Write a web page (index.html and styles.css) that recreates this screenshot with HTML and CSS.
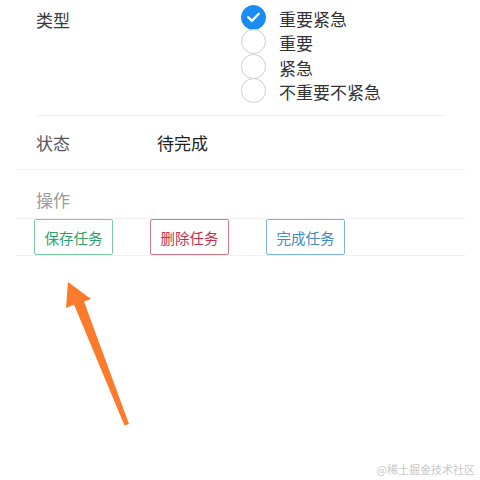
FILE: index.html
```html
<!DOCTYPE html>
<html lang="zh">
<head>
<meta charset="utf-8">
<link rel="stylesheet" href="styles.css">
</head>
<body>
<div class="page">
  <div class="row row-type">
    <div class="label label-dark">类型</div>
    <div class="radios">
      <div class="radio checked">
        <span class="circle">
          <svg viewBox="0 0 24 24" width="24" height="24"><path d="M6.5 12.3 L10.3 16 L17.5 8.6" fill="none" stroke="#fff" stroke-width="2.4" stroke-linecap="round" stroke-linejoin="round"/></svg>
        </span>
        <span class="rtext">重要紧急</span>
      </div>
      <div class="radio"><span class="circle"></span><span class="rtext">重要</span></div>
      <div class="radio"><span class="circle"></span><span class="rtext">紧急</span></div>
      <div class="radio"><span class="circle"></span><span class="rtext">不重要不紧急</span></div>
    </div>
  </div>
  <div class="divider inset"></div>
  <div class="row row-status">
    <div class="label label-mid">状态</div>
    <div class="value">待完成</div>
  </div>
  <div class="divider"></div>
  <div class="row row-op">
    <div class="label label-light">操作</div>
  </div>
  <div class="divider"></div>
  <div class="buttons">
    <button class="btn btn-save">保存任务</button>
    <button class="btn btn-del">删除任务</button>
    <button class="btn btn-done">完成任务</button>
  </div>
  <div class="divider"></div>

  <svg class="arrow" width="480" height="480" viewBox="0 0 480 480">
    <polygon fill="#fb7a2b" points="68,282 66,308 74,304.5 124.5,425.5 129,424 84,301.5 91,299"/>
  </svg>

  <div class="watermark">@稀土掘金技术社区</div>
</div>
</body>
</html>
```

FILE: styles.css
```css
html, body {
  margin: 0;
  padding: 0;
  background: #fff;
}
body {
  font-family: "Noto Sans CJK SC", "Noto Sans", sans-serif;
  color: #333;
}
.page {
  position: relative;
  width: 480px;
  height: 480px;
  overflow: hidden;
}
.row {
  display: flex;
  align-items: flex-start;
  padding-left: 36px;
}
.row-type {
  padding-top: 5px;
  padding-bottom: 12px;
}
.label {
  font-size: 17px;
  line-height: 30px;
  width: 121px;
}
.label-dark { color: #3a3a3a; }
.label-mid { color: #555; }
.label-light { color: #9a9a9a; line-height: 24px; }
.radios {
  margin-left: 84px;
  display: flex;
  flex-direction: column;
}
.radio {
  display: flex;
  align-items: center;
  height: 24.5px;
}
.circle {
  width: 23px;
  height: 23px;
  border: 1px solid #cfcfcf;
  border-radius: 50%;
  box-sizing: content-box;
  display: flex;
  align-items: center;
  justify-content: center;
  background: #fff;
}
.radio.checked .circle {
  background: #1b8cf2;
  border-color: #1b8cf2;
}
.rtext {
  margin-left: 13px;
  font-size: 17px;
  line-height: 24px;
  color: #333;
  position: relative;
  top: 1.5px;
}
.divider {
  height: 1px;
  background: #f0f0f0;
  margin: 0 15px 0 16px;
}
.divider.inset {
  margin: 0 34px 0 36px;
}
.row-status {
  height: 53px;
  align-items: center;
}
.row-status .label { line-height: 24px; }
.value {
  font-size: 17px;
  color: #222;
}
.row-op {
  height: 48px;
  padding-top: 18px;
  box-sizing: border-box;
}
.buttons {
  display: flex;
  gap: 37px;
  padding-left: 34px;
  height: 36px;
}
.btn {
  width: 79px;
  height: 36px;
  box-sizing: border-box;
  background: #fff;
  border-radius: 2px;
  font-family: "Noto Sans CJK SC", "Noto Sans", sans-serif;
  font-size: 14.5px;
  padding: 0;
  margin: 0;
}
.btn-save { border: 1px solid #7ccaa3; color: #2aa466; }
.btn-del { border: 1px solid #cf7687; color: #c3314f; }
.btn-done { border: 1px solid #7fb5d9; color: #3d8bc4; }
.arrow {
  position: absolute;
  left: 0;
  top: 0;
  pointer-events: none;
}
.watermark {
  position: absolute;
  right: 5px;
  bottom: 3px;
  font-size: 11px;
  color: #c8c8c8;
  font-family: "Noto Sans CJK SC", sans-serif;
}
```
